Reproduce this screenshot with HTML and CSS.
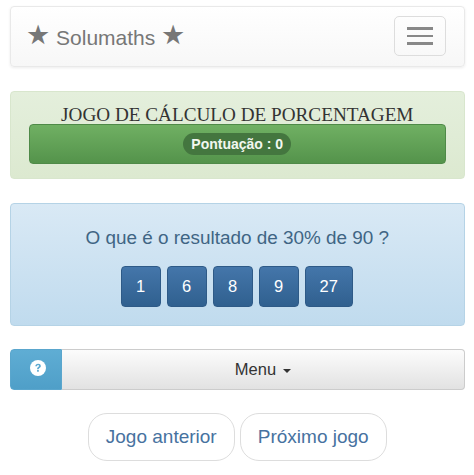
FILE: index.html
```html
<!DOCTYPE html>
<html lang="pt">
<head>
<meta charset="utf-8">
<title>Solumaths</title>
<link rel="stylesheet" href="styles.css">
</head>
<body>
<nav class="navbar">
  <span class="brand"><span class="star">★</span> Solumaths <span class="star">★</span></span>
  <button class="toggle" aria-label="Menu"><span></span><span></span><span></span></button>
</nav>
<section class="well green">
  <h1>JOGO DE CÁLCULO DE PORCENTAGEM</h1>
  <div class="progress"><span class="badge">Pontuação : 0</span></div>
</section>
<section class="well blue">
  <p class="question">O que é o resultado de 30% de 90 ?</p>
  <div class="answers">
    <button>1</button><button>6</button><button>8</button><button>9</button><button>27</button>
  </div>
</section>
<div class="menu-group">
  <button class="help" aria-label="Ajuda">
    <svg width="16" height="16" viewBox="0 0 16 16"><circle cx="8" cy="8" r="8" fill="#fff"/><path d="M5.3 6.2C5.4 4.6 6.5 3.7 8.1 3.7c1.600 0 2.700.9 2.700 2.200 0 1-.6 1.500-1.300 2-.6.4-.8.7-.8 1.300H7.100c0-1.100.3-1.700 1.100-2.200.5-.4.8-.6.800-1.100 0-.5-.4-.8-.9-.8-.6 0-1 .4-1.100 1.100zM7.100 10h1.700v1.800H7.100z" fill="#5ba8d0"/></svg>
  </button>
  <button class="menu">Menu <i class="caret"></i></button>
</div>
<div class="pills">
  <a href="#">Jogo anterior</a>
  <a href="#">Próximo jogo</a>
</div>
</body>
</html>
```
FILE: styles.css
```css
* { box-sizing: border-box; }
html, body { margin: 0; padding: 0; }
body {
  width: 474px;
  height: 475px;
  padding: 6px 9.500px 0 10px;
  background: #fff;
  font-family: "Liberation Sans", Arial, sans-serif;
  overflow: hidden;
}
button { font-family: inherit; cursor: pointer; }
.navbar {
  height: 61px;
  display: flex;
  align-items: center;
  justify-content: space-between;
  padding: 0 18px 0 15px;
  border: 1px solid #e9e9e9;
  border-radius: 4px;
  background: linear-gradient(#fff, #f7f7f7);
  box-shadow: 0 1px 3px rgba(0,0,0,.08);
}
.brand { color: #777; font-size: 21px; line-height: 24px; white-space: nowrap; }
.star { font-family: "DejaVu Sans", sans-serif; font-size: 27px; line-height: 24px; position: relative; top: -1px; }
.toggle {
  width: 52px;
  height: 40px;
  display: flex;
  flex-direction: column;
  justify-content: center;
  align-items: center;
  gap: 5px;
  padding: 0;
  margin-top: -1px;
  background: transparent;
  border: 1px solid #ddd;
  border-radius: 5px;
}
.toggle span { display: block; width: 26px; height: 2.500px; background: #888; }
.well { border-radius: 4px; }
.green {
  height: 88px;
  margin-top: 24px;
  padding: 12px 18px 0;
  background: linear-gradient(#e4efdc, #dce9d0);
  border: 1px solid #d8e6cd;
}
h1 {
  margin: 0;
  height: 20px;
  color: #333;
  font: 400 19.200px/22px "Liberation Serif", "Times New Roman", serif;
  text-align: center;
  white-space: nowrap;
}
.progress {
  height: 40px;
  display: flex;
  align-items: center;
  justify-content: center;
  border-radius: 4px;
  border: 1px solid #4f8a48;
  background: linear-gradient(#70b063, #54934b);
}
.badge {
  padding: 3px 8px;
  border-radius: 11px;
  background: #44763f;
  color: #f2f7ef;
  font-size: 14px;
  font-weight: 700;
  line-height: 16px;
}
.blue {
  height: 123px;
  margin-top: 24px;
  padding: 21px 0 0;
  background: linear-gradient(#d9e9f5, #c0dbee);
  border: 1px solid #b5d3e6;
  text-align: center;
}
.question { margin: 0; height: 25px; color: #3f6584; font-size: 18.900px; line-height: 25px; }
.answers { display: flex; justify-content: center; gap: 6px; margin-top: 16px; padding-right: 1px; }
.answers button {
  height: 41px;
  min-width: 40px;
  padding: 0 14px;
  color: #fff;
  font-size: 16.500px;
  border: 1px solid #2e5a87;
  border-radius: 4px;
  background: linear-gradient(#4476aa, #30608f);
}
.menu-group { display: flex; height: 41px; margin-top: 23px; }
.help {
  width: 52px;
  padding: 0 0 4px 4px;
  border: 1px solid #5aa6cd;
  border-radius: 4px 0 0 4px;
  background: linear-gradient(#5fadd4, #4f9fc8);
}
.help svg { display: block; margin: 0 auto; }
.menu {
  flex: 1;
  padding: 0;
  color: #333;
  font-size: 16.500px;
  border: 1px solid #ccc;
  border-left: 0;
  border-radius: 0 4px 4px 0;
  background: linear-gradient(#fcfcfc, #e2e2e2);
}
.caret {
  display: inline-block;
  margin-left: 2px;
  vertical-align: middle;
  border-top: 4px solid #333;
  border-left: 4px solid transparent;
  border-right: 4px solid transparent;
}
.pills { display: flex; justify-content: center; gap: 5px; margin-top: 23px; }
.pills a {
  width: 147px;
  height: 48px;
  display: flex;
  align-items: center;
  justify-content: center;
  color: #47729f;
  font-size: 19px;
  text-decoration: none;
  border: 1px solid #ddd;
  border-radius: 19px;
}
```
